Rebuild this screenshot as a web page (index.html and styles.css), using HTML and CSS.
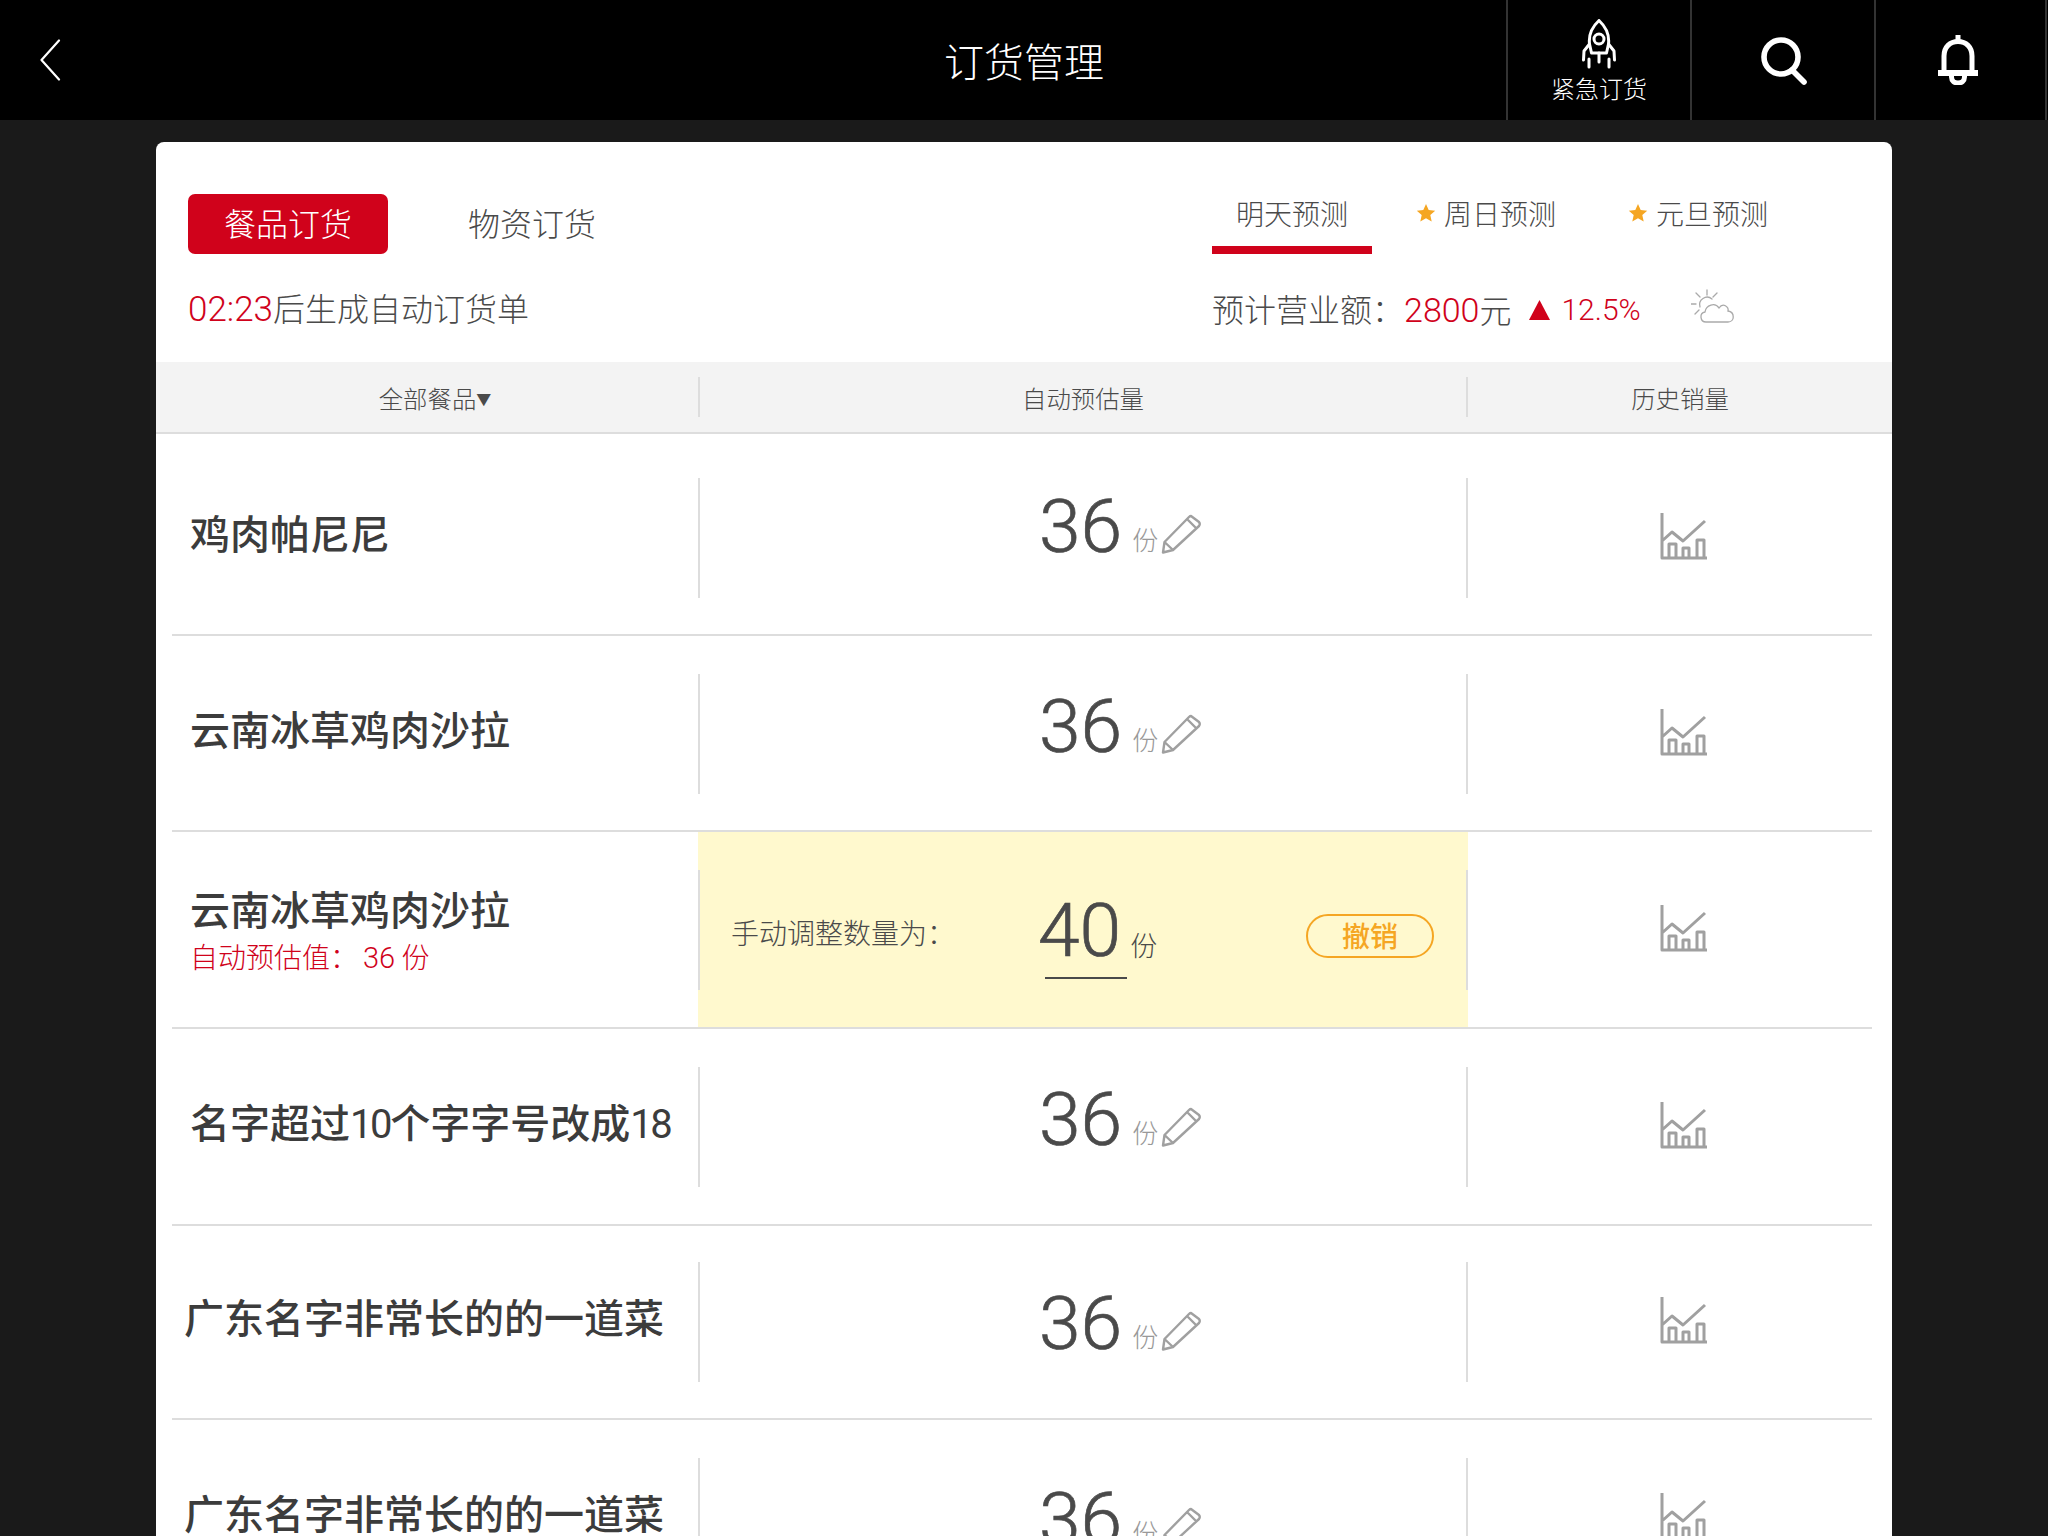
FILE: index.html
```html
<!DOCTYPE html>
<html lang="zh">
<head>
  <meta charset="utf-8">
  <title>订货管理</title>
  <link rel="stylesheet" href="styles.css">
</head>
<body>

  <!-- Icons used more than once -->
  <svg class="sprites">
    <symbol id="i-star" viewBox="0 0 20 20"><path d="M10 1 L12.700 7 L19.200 7.700 L14.300 12 L15.700 18.500 L10 15.200 L4.300 18.500 L5.700 12 L0.800 7.700 L7.300 7 Z" fill="#f5a623"/></symbol>
    <symbol id="i-pencil" viewBox="0 0 40 40"><path d="M30 2 L38 8 Q39.500 10 38 12 L12 36 L2 38.500 L3.500 28 L28 3 Q29 2 30 2 Z M3.500 28 L12 36 M26 5 L35 14" fill="none" stroke="#a0a0a0" stroke-width="2.400" stroke-linejoin="round"/></symbol>
    <symbol id="i-chart" viewBox="0 0 48 48"><path d="M2 1 V46 H47 M2 29 L12 20 L23 29 L45 9 M9 46 V32 H16 V46 M23 46 V36 H29 V46 M37 46 V28 H44 V46" fill="none" stroke="#a0a0a0" stroke-width="3" stroke-linejoin="round"/></symbol>
  </svg>

  <!-- Top bar -->
  <header class="topbar">
    <div class="back">
      <svg width="22" height="42" viewBox="0 0 22 42"><path d="M20 1.500 L2.500 21 L20 40.500" fill="none" stroke="#fff" stroke-width="2.200" stroke-linecap="round" stroke-linejoin="round"/></svg>
    </div>
    <h1 class="title">订货管理</h1>
    <div class="actions">
      <div class="action action-rocket">
        <svg width="36" height="50" viewBox="0 0 36 50" fill="none" stroke="#fff" stroke-width="3" stroke-linecap="round" stroke-linejoin="round">
          <path d="M18 1.500 C11 8 7.500 16 8.500 25 L10.500 34 H25.500 L27.500 25 C28.500 16 25 8 18 1.500 Z"/>
          <circle cx="18" cy="20" r="5"/>
          <path d="M8.500 25 L3 32 L2.500 41 M27.500 25 L33 32 L33.500 41"/>
          <path d="M18 34 V43 M8 40 V48 M28 40 V48"/>
        </svg>
        <span>紧急订货</span>
      </div>
      <div class="action action-search">
        <svg width="46" height="48" viewBox="0 0 46 48" fill="none" stroke="#fff" stroke-width="5.600" stroke-linecap="round">
          <circle cx="20" cy="20" r="17"/>
          <path d="M31 33 L43 45"/>
        </svg>
      </div>
      <div class="action action-bell">
        <svg width="40" height="50" viewBox="0 0 40 50" fill="none" stroke="#fff" stroke-width="5">
          <path d="M20 0 V7"/>
          <path d="M6 36 V21 C6 12 12 6.500 20 6.500 C28 6.500 34 12 34 21 V36"/>
          <path d="M0 38 H40" stroke-width="6"/>
          <path d="M13.500 40 V42 C13.500 46 16.500 48 20 48 C23.500 48 26.500 46 26.500 42 V40"/>
        </svg>
      </div>
    </div>
  </header>

  <main class="card">
    <section class="card-head">
      <div class="head-line">
        <div class="kinds">
          <span class="kind kind-on">餐品订货</span>
          <span class="kind">物资订货</span>
        </div>
        <div class="days">
          <span class="day day-on">明天预测</span>
          <span class="day day-star"><svg class="star" width="20" height="20"><use href="#i-star"/></svg>周日预测</span>
          <span class="day day-star day-last"><svg class="star" width="20" height="20"><use href="#i-star"/></svg>元旦预测</span>
        </div>
      </div>
      <div class="head-line info-line">
        <div class="countdown"><span class="red digits">02:23</span>后生成自动订货单</div>
        <div class="revenue">
          <span>预计营业额：</span>
          <span class="red digits money">2800</span><span class="yuan">元</span>
          <svg class="up" width="21" height="20" viewBox="0 0 21 20"><path d="M10.500 0 L21 20 H0 Z" fill="#d0021b"/></svg>
          <span class="red digits pct">12.5%</span>
          <svg class="weather" width="44" height="34" viewBox="0 0 44 34" fill="none" stroke="#aaa" stroke-width="1.300" stroke-linecap="round">
            <path d="M16 1 V6 M5 4 L9 8 M26 4 L22 8 M0 15 H5 M4 25 L8 21"/>
            <path d="M9 18 A7.500 7.500 0 0 1 21 10"/>
            <path d="M15 33 C9 33 8 24 14 23 C15 16 24 13 28 19 C32 13 38 18 37 22 C44 23 44 33 37 33 Z"/>
          </svg>
        </div>
      </div>
    </section>

    <div class="columns">
      <div class="column column-name"><span>全部餐品<i class="caret">▼</i></span></div>
      <div class="column column-qty"><span>自动预估量</span></div>
      <div class="column column-hist"><span>历史销量</span></div>
    </div>

    <div class="rows">
      <div class="row row-first">
        <div class="name"><b>鸡肉帕尼尼</b></div>
        <div class="qty">
          <span class="num">36</span><span class="unit">份</span>
          <svg class="pencil" width="40" height="40"><use href="#i-pencil"/></svg>
        </div>
        <div class="hist"><svg width="48" height="48"><use href="#i-chart"/></svg></div>
      </div>

      <div class="row row-down">
        <div class="name"><b>云南冰草鸡肉沙拉</b></div>
        <div class="qty">
          <span class="num">36</span><span class="unit">份</span>
          <svg class="pencil" width="40" height="40"><use href="#i-pencil"/></svg>
        </div>
        <div class="hist"><svg width="48" height="48"><use href="#i-chart"/></svg></div>
      </div>

      <div class="row row-edit">
        <div class="name name-two"><b>云南冰草鸡肉沙拉</b><em>自动预估值：<span class="digits sub-num">36</span> 份</em></div>
        <div class="adjust">
          <div class="qty qty-adjust">
            <span class="adjust-label">手动调整数量为：</span>
            <span class="num num-edit">40</span><span class="unit unit-dark">份</span>
            <span class="undo">撤销</span>
          </div>
        </div>
        <div class="hist"><svg width="48" height="48"><use href="#i-chart"/></svg></div>
      </div>

      <div class="row row-down row-fourth">
        <div class="name"><b>名字超过<span class="name-num">10</span>个字字号改成<span class="name-num">18</span></b></div>
        <div class="qty">
          <span class="num">36</span><span class="unit">份</span>
          <svg class="pencil" width="40" height="40"><use href="#i-pencil"/></svg>
        </div>
        <div class="hist"><svg width="48" height="48"><use href="#i-chart"/></svg></div>
      </div>

      <div class="row row-lower row-fifth">
        <div class="name name-long"><b>广东名字非常长的的一道菜</b></div>
        <div class="qty">
          <span class="num">36</span><span class="unit">份</span>
          <svg class="pencil" width="40" height="40"><use href="#i-pencil"/></svg>
        </div>
        <div class="hist"><svg width="48" height="48"><use href="#i-chart"/></svg></div>
      </div>

      <div class="row row-lower">
        <div class="name name-long"><b>广东名字非常长的的一道菜</b></div>
        <div class="qty">
          <span class="num">36</span><span class="unit">份</span>
          <svg class="pencil" width="40" height="40"><use href="#i-pencil"/></svg>
        </div>
        <div class="hist"><svg width="48" height="48"><use href="#i-chart"/></svg></div>
      </div>
    </div>
  </main>

</body>
</html>
```

FILE: styles.css
```css
html, body {
  height: 100%;
}
body {
  margin: 0;
  height: 1536px;
  overflow: hidden;
  background-color: #1a1a1a;
  color: #4a4a4a;
  font-family: "Noto Sans CJK SC", "Liberation Sans", sans-serif;
  font-weight: 300;
}
svg {
  display: block;
  flex: none;
}
.sprites {
  display: none;
}
.red {
  color: #d0021b;
}
.digits {
  font-family: Roboto, "Liberation Sans", sans-serif;
  font-weight: 300;
}

/* Top bar */
.topbar {
  display: grid;
  grid-template-columns: 1fr auto 1fr;
  align-items: center;
  height: 120px;
  background-color: #000;
  color: #fff;
}
.back {
  padding-left: 39px;
}
.title {
  margin: 0;
  font-size: 40px;
  font-weight: 300;
  line-height: 120px;
}
.actions {
  justify-self: end;
  display: flex;
  height: 120px;
  margin-right: 1px;
}
.action {
  box-sizing: border-box;
  width: 184px;
  height: 120px;
  border-left: 2px solid #333;
  display: flex;
  flex-direction: column;
  align-items: center;
  justify-content: center;
}
.action-rocket {
  justify-content: flex-start;
  padding-top: 19px;
}
.action-rocket span {
  font-size: 24px;
  line-height: 38px;
}
.action-search {
  padding: 2px 0 0 2px;
}
.action-bell {
  width: 173px;
  padding-right: 5px;
  border-right: 2px solid #333;
}

/* Card */
.card {
  width: 1736px;
  margin: 22px 0 0 156px;
  background-color: #fff;
  border-radius: 8px 8px 0 0;
}
.card-head {
  height: 220px;
  padding: 52px 0 0 32px;
  box-sizing: border-box;
}
.head-line {
  display: grid;
  grid-template-columns: 1024px 1fr;
}
.kinds {
  display: flex;
  align-items: center;
}
.kind {
  font-size: 32px;
  line-height: 56px;
  padding-bottom: 4px;
  color: #4a4a4a;
  margin-left: 80px;
}
.kind-on {
  width: 200px;
  margin-left: 0;
  text-align: center;
  background-color: #d0021b;
  border-radius: 7px;
  color: #fff;
}
.days {
  display: flex;
  height: 60px;
}
.day {
  display: flex;
  align-items: flex-start;
  gap: 8px;
  font-size: 28px;
  line-height: 38px;
  margin-left: 44px;
  color: #4a4a4a;
}
.day-on {
  box-sizing: border-box;
  width: 160px;
  margin-left: 0;
  justify-content: center;
  border-bottom: 8px solid #d0021b;
}
.day-last {
  margin-left: 72px;
}
.star {
  margin-top: 9px;
}
.info-line {
  margin-top: 30px;
  height: 44px;
  align-items: center;
  font-size: 32px;
  line-height: 44px;
}
.countdown .digits {
  font-size: 35px;
}
.revenue {
  display: flex;
  align-items: center;
}
.money {
  font-size: 34px;
  padding-top: 3px;
}
.yuan {
  padding-top: 2px;
}
.up {
  margin: 3px 0 0 18px;
}
.pct {
  margin-left: 11px;
  padding-top: 4px;
  font-size: 30px;
}
.weather {
  margin: -4px 0 0 50px;
}

/* Column heads */
.columns {
  display: grid;
  grid-template-columns: 542px 770px 424px;
  align-items: center;
  height: 70px;
  background-color: #f3f3f3;
  border-bottom: 2px solid #ddd;
  font-size: 24.400px;
  text-align: center;
  color: #4a4a4a;
}
.column {
  height: 40px;
  line-height: 42px;
}
.column-name {
  padding-left: 16px;
}
.caret {
  font-style: normal;
  font-size: 15px;
  vertical-align: 3px;
}
.column-qty {
  box-sizing: border-box;
  border-left: 2px solid #ddd;
  border-right: 2px solid #ddd;
}

/* Rows */
.row {
  display: grid;
  grid-template-columns: 526px 770px 404px;
  margin: 0 20px 0 16px;
  padding: 38px 0 36px;
  border-bottom: 2px solid #ddd;
}
.row-first {
  padding-top: 44px;
}
.row-edit {
  padding-bottom: 37px;
}
.row-fourth {
  padding: 38px 0 37px;
}
.row-fourth .name {
  padding-bottom: 8px;
}
.row-fifth {
  padding: 36px 0 36px;
}
.name {
  display: flex;
  flex-direction: column;
  justify-content: center;
  box-sizing: border-box;
  height: 120px;
  padding: 0 0 12px 18px;
}
.name b {
  font-size: 40px;
  font-weight: 500;
  line-height: 50px;
  color: #3c3c3c;
}
.name-num {
  font-family: Roboto, sans-serif;
  font-weight: 400;
  letter-spacing: -2.400px;
}
.name-long {
  padding-left: 12px;
  padding-bottom: 13px;
}
.name-two {
  padding-bottom: 0;
  justify-content: flex-start;
}
.name-two b {
  margin-top: 13px;
}
.name-two em {
  font-style: normal;
  font-size: 28px;
  line-height: 46px;
  color: #d0021b;
}
.sub-num {
  margin-left: 5px;
  font-size: 29px;
}
.qty {
  display: flex;
  align-items: flex-start;
  box-sizing: border-box;
  height: 120px;
  padding-left: 339px;
  border-left: 2px solid #ddd;
  border-right: 2px solid #ddd;
  position: relative;
}
.row-down .qty {
  padding-top: 4px;
}
.row-lower .qty {
  padding-top: 13px;
}
.num {
  font-family: Roboto, "Liberation Sans", sans-serif;
  font-size: 75px;
  font-weight: 300;
  line-height: 75px;
  margin-top: 11px;
  color: #4a4a4a;
  -webkit-text-stroke: 0.7px #4a4a4a;
}
.unit {
  margin: 44px 0 0 10px;
  font-size: 26px;
  line-height: 34px;
  color: #999;
}
.pencil {
  margin: 36px 0 0 3px;
}
.hist {
  display: flex;
  justify-content: center;
  padding: 34px 0 0 28px;
  height: 85px;
}

/* Row edited by hand */
.adjust {
  margin: -38px 0 -37px;
  padding: 38px 0 37px;
  background-color: #fff9ce;
}
.qty-adjust {
  padding-left: 31px;
}
.adjust-label {
  width: 307px;
  font-size: 28px;
  line-height: 40px;
  margin-top: 42px;
}
.num-edit {
  margin-top: 23px;
  height: 83px;
  color: #4a4a4a;
}
.num-edit::after {
  content: "";
  position: absolute;
  left: 345px;
  top: 107px;
  width: 82px;
  height: 2px;
  background-color: #4a4a4a;
}
.unit-dark {
  margin: 58px 0 0 9px;
  font-size: 27px;
  color: #4a4a4a;
}
.undo {
  box-sizing: border-box;
  width: 128px;
  height: 44px;
  margin: 44px 0 0 auto;
  margin-right: 32px;
  border: 2px solid #f5a623;
  border-radius: 22px;
  font-size: 28px;
  line-height: 38px;
  text-align: center;
  color: #f5a623;
  font-weight: 500;
}
```
